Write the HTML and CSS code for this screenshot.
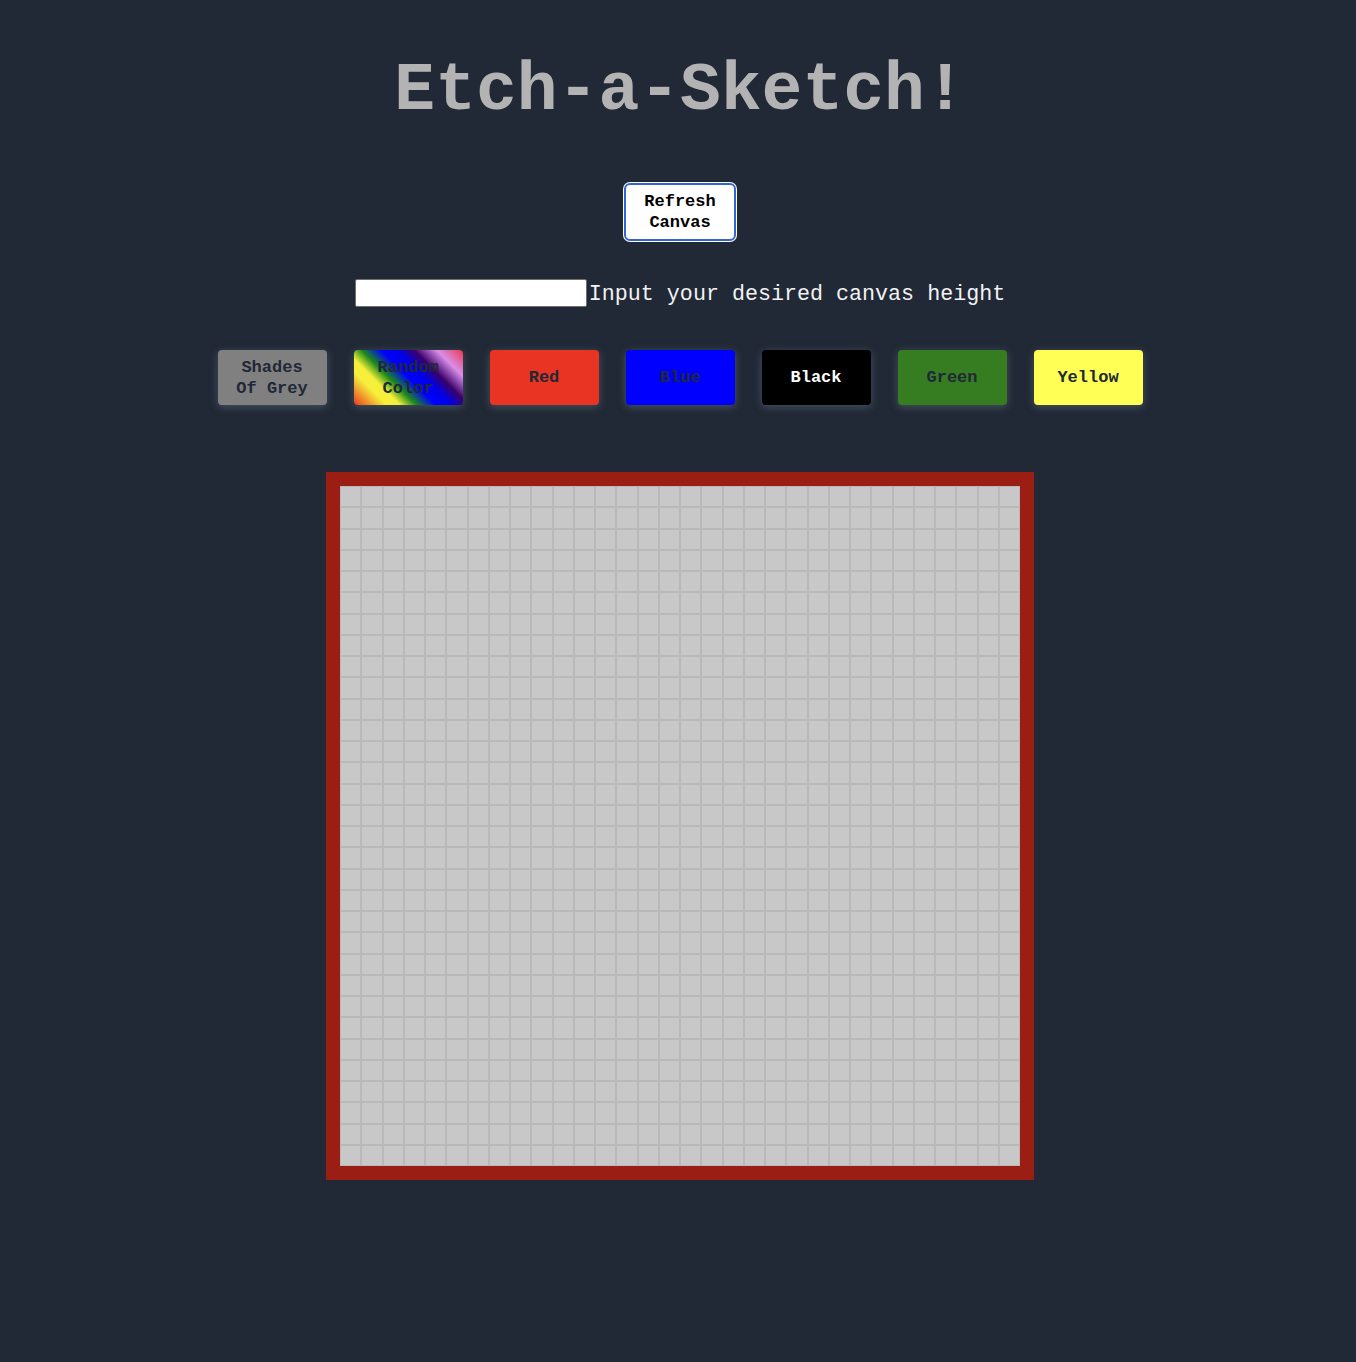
FILE: index.html
```html
<!DOCTYPE html>
<html lang="en">
<head>
<meta charset="utf-8">
<title>Etch-a-Sketch!</title>
<link rel="stylesheet" href="styles.css">
</head>
<body>
<main class="page">
  <h1 class="title">Etch-a-Sketch!</h1>
  <button class="refresh">Refresh<br>Canvas</button>
  <div class="size-row">
    <input class="size-input" type="text">
    <label class="size-label">Input your desired canvas height</label>
  </div>
  <div class="colors">
    <button class="color grey">Shades<br>Of Grey</button>
    <button class="color random">Random<br>Color</button>
    <button class="color red">Red</button>
    <button class="color blue">Blue</button>
    <button class="color black">Black</button>
    <button class="color green">Green</button>
    <button class="color yellow">Yellow</button>
  </div>
  <div class="frame">
    <div class="grid" id="grid"></div>
  </div>
</main>
<script src="script.js"></script>
</body>
</html>
```
FILE: styles.css
```css
html, body {
  margin: 0;
  padding: 0;
  background: #212836;
}
body {
  font-family: "Courier New", Courier, "Nimbus Mono PS", "Nimbus Mono L", FreeMono, "Liberation Mono", monospace;
  min-height: 1362px;
}
.page {
  display: flex;
  flex-direction: column;
  align-items: center;
  padding-left: 4px;
}
.title {
  margin: 50px 0 0;
  font-size: 68px;
  font-weight: bold;
  color: #b3b3b3;
  line-height: 82px;
  height: 82px;
}
.refresh {
  margin-top: 51px;
  width: 112px;
  height: 58px;
  background: #fff;
  border: 2px solid #3166d0;
  box-shadow: 0 0 0 1px #fff;
  border-radius: 6px;
  font-family: inherit;
  font-weight: bold;
  font-size: 17px;
  line-height: 21px;
  color: #000;
  padding: 0;
}
.size-row {
  margin-top: 38px;
  display: flex;
  align-items: center;
  height: 28px;
}
.size-input {
  width: 232px;
  height: 28px;
  box-sizing: border-box;
  border: 1px solid #6f6f6f;
  border-radius: 2px;
  background: #fff;
  margin: 0 2px 0 0;
  padding: 0;
}
.size-label {
  color: #f2f2f2;
  font-size: 21.7px;
  padding-top: 2px;
}
.colors {
  margin-top: 43px;
  display: flex;
  gap: 27px;
}
.color {
  width: 109px;
  height: 55px;
  border: none;
  border-radius: 4px;
  padding: 0;
  font-family: inherit;
  font-weight: bold;
  font-size: 17px;
  line-height: 21px;
  color: #212836;
  box-shadow: 0 2px 8px rgba(140, 165, 175, 0.35);
}
.grey { background: #808080; }
.random {
  background: linear-gradient(45deg, #e83a1f 0%, #f7ef3a 20%, #f5f03a 28%, #1d8a1a 38%, #0000ff 50%, #0000e8 60%, #3a006a 70%, #d98ee8 84%, #e83a50 100%);
}
.red { background: #e93423; }
.blue { background: #0000ff; }
.black { background: #000; color: #fff; }
.green { background: #367d22; }
.yellow { background: #ffff55; }
.frame {
  margin-top: 67px;
  border: 14px solid #9b1e14;
  width: 680px;
  height: 680px;
}
.grid {
  display: grid;
  grid-template-columns: repeat(32, 1fr);
  grid-template-rows: repeat(32, 1fr);
  width: 680px;
  height: 680px;
}
.cell {
  background: #c8c8c8;
  border: 1px solid #b9b9b9;
}
```
FILE: script.js
```js
const grid = document.getElementById('grid');
for (let i = 0; i < 32 * 32; i++) {
  const cell = document.createElement('div');
  cell.className = 'cell';
  grid.appendChild(cell);
}
```
